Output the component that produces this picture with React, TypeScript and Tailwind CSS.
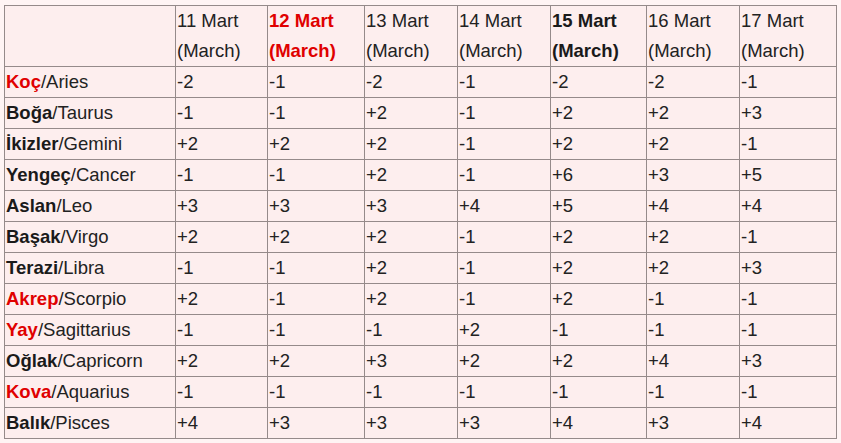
import React from 'react';

type Row = { tr: string; en: string; red?: boolean; vals: string[] };

const days = [
  { d: '11', style: 'font-normal' },
  { d: '12', style: 'font-bold text-[#e00000]' },
  { d: '13', style: 'font-normal' },
  { d: '14', style: 'font-normal' },
  { d: '15', style: 'font-bold text-[#1a1a1a]' },
  { d: '16', style: 'font-normal' },
  { d: '17', style: 'font-normal' },
];

const widths = ['w-[171px]', 'w-[92px]', 'w-[97px]', 'w-[93px]', 'w-[93px]', 'w-[96px]', 'w-[93px]', 'w-[97px]'];

const rows: Row[] = [
  { tr: 'Koç', en: 'Aries', red: true, vals: ['-2', '-1', '-2', '-1', '-2', '-2', '-1'] },
  { tr: 'Boğa', en: 'Taurus', vals: ['-1', '-1', '+2', '-1', '+2', '+2', '+3'] },
  { tr: 'İkizler', en: 'Gemini', vals: ['+2', '+2', '+2', '-1', '+2', '+2', '-1'] },
  { tr: 'Yengeç', en: 'Cancer', vals: ['-1', '-1', '+2', '-1', '+6', '+3', '+5'] },
  { tr: 'Aslan', en: 'Leo', vals: ['+3', '+3', '+3', '+4', '+5', '+4', '+4'] },
  { tr: 'Başak', en: 'Virgo', vals: ['+2', '+2', '+2', '-1', '+2', '+2', '-1'] },
  { tr: 'Terazi', en: 'Libra', vals: ['-1', '-1', '+2', '-1', '+2', '+2', '+3'] },
  { tr: 'Akrep', en: 'Scorpio', red: true, vals: ['+2', '-1', '+2', '-1', '+2', '-1', '-1'] },
  { tr: 'Yay', en: 'Sagittarius', red: true, vals: ['-1', '-1', '-1', '+2', '-1', '-1', '-1'] },
  { tr: 'Oğlak', en: 'Capricorn', vals: ['+2', '+2', '+3', '+2', '+2', '+4', '+3'] },
  { tr: 'Kova', en: 'Aquarius', red: true, vals: ['-1', '-1', '-1', '-1', '-1', '-1', '-1'] },
  { tr: 'Balık', en: 'Pisces', vals: ['+4', '+3', '+3', '+3', '+4', '+3', '+4'] },
];

const cell = 'border border-[#958a8a] px-[1px] py-0 align-top text-left';

export default function App() {
  return (
    <div className="min-h-[443px] bg-[#fff4f4] pl-[4px] pt-[5px] font-['Liberation_Sans',Arial,sans-serif] text-[18.5px] leading-[30px] text-[#222]">
      <table className="table-fixed border-collapse border border-[#857777] bg-[#fdeeee]">
        <thead>
          <tr>
            <th className={`${cell} ${widths[0]}`}></th>
            {days.map((day, i) => (
              <th key={day.d} className={`${cell} ${widths[i + 1]} ${day.style}`}>
                {day.d} Mart
                <br />
                (March)
              </th>
            ))}
          </tr>
        </thead>
        <tbody>
          {rows.map((r) => (
            <tr key={r.en}>
              <td className={cell}>
                <b className={r.red ? 'text-[#e00000]' : 'text-[#1a1a1a]'}>{r.tr}</b>/{r.en}
              </td>
              {r.vals.map((v, i) => (
                <td key={i} className={cell}>
                  {v}
                </td>
              ))}
            </tr>
          ))}
        </tbody>
      </table>
    </div>
  );
}
